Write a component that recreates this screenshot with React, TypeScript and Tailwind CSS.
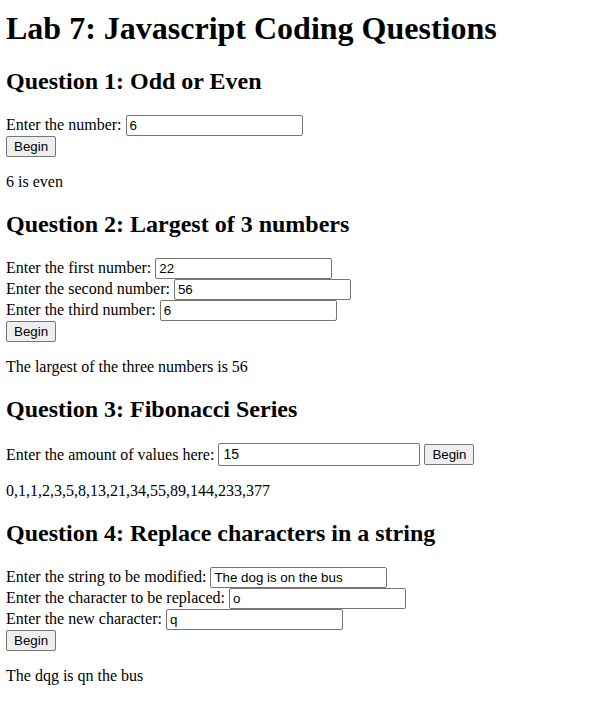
const inputCls =
  "inline-block w-[177px] h-[21px] border border-[#767676] rounded-[2px] bg-white px-[3px] py-[1px] font-['Liberation_Sans',Arial,sans-serif] text-[13.333px] leading-[normal] text-black align-baseline outline-none";

const buttonCls =
  "inline-block h-[21px] border border-[#767676] rounded-[2px] bg-[#efefef] px-[7px] py-[1px] font-['Liberation_Sans',Arial,sans-serif] text-[13.333px] leading-[normal] text-black align-baseline";

function Field({ label, value }: { label: string; value: string }) {
  return (
    <>
      <label>{label} </label>
      <input className={inputCls} type="text" defaultValue={value} />
      <br />
    </>
  );
}

export default function App() {
  return (
    <div className="bg-white pl-[6px] pr-2 pt-[10px] pb-2 font-['Liberation_Serif','Times_New_Roman',serif] text-base leading-[normal] text-black min-h-[706px]">
      <h1 className="text-[32px] font-bold leading-[normal] mb-[21.44px]">
        Lab 7: Javascript Coding Questions
      </h1>

      <h2 className="text-[24px] font-bold leading-[normal] my-[19.92px]">
        Question 1: Odd or Even
      </h2>
      <div>
        <Field label="Enter the number:" value="6" />
        <button className={buttonCls}>Begin</button>
      </div>
      <p className="my-4">6 is even</p>

      <h2 className="text-[24px] font-bold leading-[normal] my-[19.92px]">
        Question 2: Largest of 3 numbers
      </h2>
      <div>
        <Field label="Enter the first number:" value="22" />
        <Field label="Enter the second number:" value="56" />
        <Field label="Enter the third number:" value="6" />
        <button className={buttonCls}>Begin</button>
      </div>
      <p className="my-4">The largest of the three numbers is 56</p>

      <h2 className="text-[24px] font-bold leading-[normal] my-[19.92px]">
        Question 3: Fibonacci Series
      </h2>
      <div>
        <label>Enter the amount of values here: </label>
        <input
          className="inline-block w-[202px] h-[23px] border border-[#767676] rounded-[2px] bg-white px-[4px] py-[2px] font-['Liberation_Sans',Arial,sans-serif] text-[14px] leading-[normal] text-black align-baseline outline-none"
          type="text"
          defaultValue="15"
        />{" "}
        <button className={buttonCls}>Begin</button>
      </div>
      <p className="my-4">0,1,1,2,3,5,8,13,21,34,55,89,144,233,377</p>

      <h2 className="text-[24px] font-bold leading-[normal] my-[19.92px]">
        Question 4: Replace characters in a string
      </h2>
      <div>
        <Field label="Enter the string to be modified:" value="The dog is on the bus" />
        <Field label="Enter the character to be replaced:" value="o" />
        <Field label="Enter the new character:" value="q" />
        <button className={buttonCls}>Begin</button>
      </div>
      <p className="my-4">The dqg is qn the bus</p>
    </div>
  );
}
